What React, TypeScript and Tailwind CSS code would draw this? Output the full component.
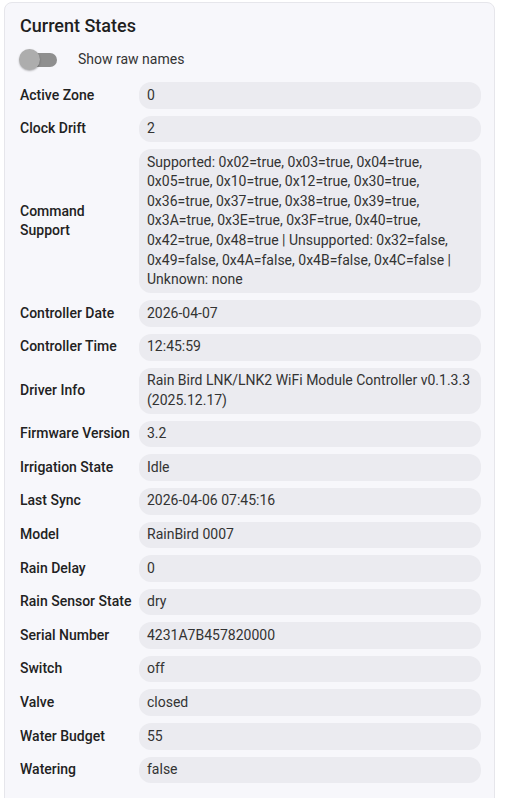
import React from 'react';

const rows: [string, string][] = [
  ['Active Zone', '0'],
  ['Clock Drift', '2'],
  [
    'Command Support',
    'Supported: 0x02=true, 0x03=true, 0x04=true, 0x05=true, 0x10=true, 0x12=true, 0x30=true, 0x36=true, 0x37=true, 0x38=true, 0x39=true, 0x3A=true, 0x3E=true, 0x3F=true, 0x40=true, 0x42=true, 0x48=true | Unsupported: 0x32=false, 0x49=false, 0x4A=false, 0x4B=false, 0x4C=false | Unknown: none',
  ],
  ['Controller Date', '2026-04-07'],
  ['Controller Time', '12:45:59'],
  ['Driver Info', 'Rain Bird LNK/LNK2 WiFi Module Controller v0.1.3.3 (2025.12.17)'],
  ['Firmware Version', '3.2'],
  ['Irrigation State', 'Idle'],
  ['Last Sync', '2026-04-06 07:45:16'],
  ['Model', 'RainBird 0007'],
  ['Rain Delay', '0'],
  ['Rain Sensor State', 'dry'],
  ['Serial Number', '4231A7B457820000'],
  ['Switch', 'off'],
  ['Valve', 'closed'],
  ['Water Budget', '55'],
  ['Watering', 'false'],
];

const Toggle: React.FC = () => (
  <div className="relative w-[37px] h-[14px] rounded-full bg-[#8f8f8f]">
    <div className="absolute left-[-1px] top-[-3.5px] w-[21px] h-[21px] rounded-full bg-[#adadad] shadow-[0_1px_2px_rgba(0,0,0,0.3)]" />
  </div>
);

export default function App() {
  return (
    <div className="min-h-screen bg-white font-['Roboto',sans-serif]">
      <div className="ml-[4px] mt-[2px] w-[491px] rounded-lg border border-[#e6e6eb] bg-[#f7f7fb] pl-[15px] pr-[13px] pt-[11px] pb-6">
        <h2 className="text-[18px] leading-[24px] font-medium text-[#1f1f1f]">Current States</h2>
        <div className="mt-[11px] flex items-center h-[21px]">
          <Toggle />
          <span className="ml-[21px] text-[14px] text-[#333]">Show raw names</span>
        </div>
        <div className="mt-[12px] grid grid-cols-[112px_1fr] gap-x-[7px] gap-y-[7px] items-center">
          {rows.map(([label, value]) => (
            <React.Fragment key={label}>
              <div className="text-[14px] leading-[19.6px] font-medium text-[#222]">{label}</div>
              <div className="rounded-[12px] bg-[#ebebf0] px-2 py-[3.5px] text-[14px] leading-[19.6px] text-[#333]">
                {value}
              </div>
            </React.Fragment>
          ))}
        </div>
      </div>
    </div>
  );
}
